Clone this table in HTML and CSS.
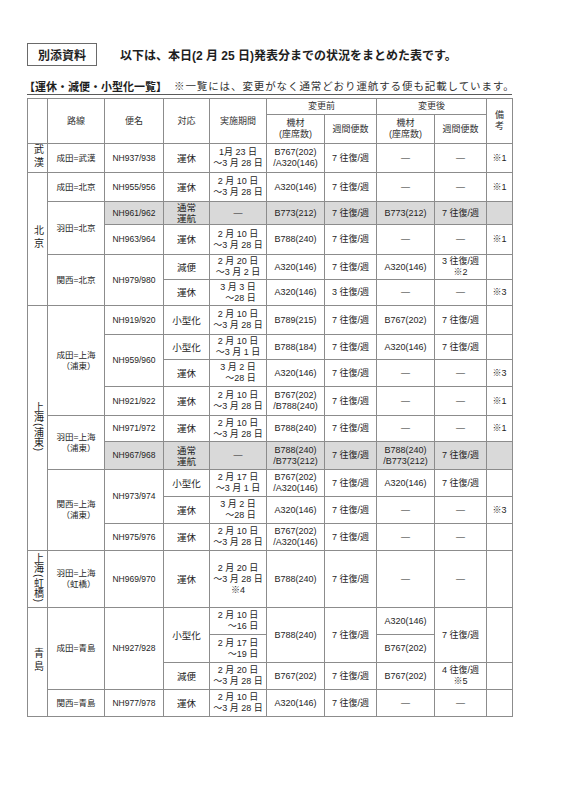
FILE: index.html
```html
<!DOCTYPE html>
<html lang="ja">
<head>
<meta charset="utf-8">
<title>運休・減便・小型化一覧</title>
<link rel="stylesheet" href="styles.css">
</head>
<body>
<div class="page">
  <div class="top">
    <div class="tag">別添資料</div>
    <div class="title">以下は、本日(2 月 25 日)発表分までの状況をまとめた表です。</div>
  </div>
  <div class="sub">
    <span class="subhead">【運休・減便・小型化一覧】</span>
    <span class="note">※一覧には、変更がなく通常どおり運航する便も記載しています。</span>
  </div>
  <table class="tbl">
    <colgroup>
      <col class="c20"><col class="c57"><col class="c59"><col class="c46"><col class="c57">
      <col class="c58"><col class="c52"><col class="c58"><col class="c52"><col class="c26">
    </colgroup>
    <thead>
      <tr class="h16">
        <th rowspan="2"></th><th rowspan="2">路線</th><th rowspan="2">便名</th><th rowspan="2">対応</th><th rowspan="2">実施期間</th>
        <th colspan="2">変更前</th><th colspan="2">変更後</th><th rowspan="2">備<br>考</th>
      </tr>
      <tr class="h29">
        <th>機材<br>(座席数)</th><th>週間便数</th><th>機材<br>(座席数)</th><th>週間便数</th>
      </tr>
    </thead>
    <tbody>
      <tr class="h28">
        <td class="rg"><span class="v sp">武漢</span></td><td class="rt">成田=武漢</td><td class="fl">NH937/938</td><td class="ac">運休</td>
        <td>1月 23 日<br>～3 月 28 日</td><td>B767(202)<br>/A320(146)</td><td>7 往復/週</td><td>—</td><td>—</td><td>※1</td>
      </tr>
      <tr class="h29">
        <td class="rg" rowspan="5"><span class="v sp">北京</span></td><td class="rt">成田=北京</td><td class="fl">NH955/956</td><td class="ac">運休</td>
        <td>2 月 10 日<br>～3 月 28 日</td><td>A320(146)</td><td>7 往復/週</td><td>—</td><td>—</td><td>※1</td>
      </tr>
      <tr class="h23 gray">
        <td class="rt w" rowspan="2">羽田=北京</td><td class="fl">NH961/962</td><td class="ac">通常<br>運航</td>
        <td>—</td><td>B773(212)</td><td>7 往復/週</td><td>B773(212)</td><td>7 往復/週</td><td></td>
      </tr>
      <tr class="h30">
        <td class="fl">NH963/964</td><td class="ac">運休</td>
        <td>2 月 10 日<br>～3 月 28 日</td><td>B788(240)</td><td>7 往復/週</td><td>—</td><td>—</td><td>※1</td>
      </tr>
      <tr class="h25">
        <td class="rt" rowspan="2">関西=北京</td><td class="fl" rowspan="2">NH979/980</td><td class="ac">減便</td>
        <td>2 月 20 日<br>～3 月 2 日</td><td>A320(146)</td><td>7 往復/週</td><td>A320(146)</td><td>3 往復/週<br>※2</td><td></td>
      </tr>
      <tr class="h26">
        <td class="ac">運休</td>
        <td><span class="ra">3 月 3 日<br>～28 日</span></td><td>A320(146)</td><td>3 往復/週</td><td>—</td><td>—</td><td>※3</td>
      </tr>
      <tr class="h29">
        <td class="rg" rowspan="9"><span class="v">上海(浦東)</span></td>
        <td class="rt" rowspan="4"><span class="ra">成田=上海<br>（浦東）</span></td><td class="fl">NH919/920</td><td class="ac">小型化</td>
        <td>2 月 10 日<br>～3 月 28 日</td><td>B789(215)</td><td>7 往復/週</td><td>B767(202)</td><td>7 往復/週</td><td></td>
      </tr>
      <tr class="h25">
        <td class="fl" rowspan="2">NH959/960</td><td class="ac">小型化</td>
        <td>2 月 10 日<br>～3 月 1 日</td><td>B788(184)</td><td>7 往復/週</td><td>A320(146)</td><td>7 往復/週</td><td></td>
      </tr>
      <tr class="h27">
        <td class="ac">運休</td>
        <td><span class="ra">3 月 2 日<br>～28 日</span></td><td>A320(146)</td><td>7 往復/週</td><td>—</td><td>—</td><td>※3</td>
      </tr>
      <tr class="h29">
        <td class="fl">NH921/922</td><td class="ac">運休</td>
        <td>2 月 10 日<br>～3 月 28 日</td><td>B767(202)<br>/B788(240)</td><td>7 往復/週</td><td>—</td><td>—</td><td>※1</td>
      </tr>
      <tr class="h26">
        <td class="rt" rowspan="2"><span class="ra">羽田=上海<br>（浦東）</span></td><td class="fl">NH971/972</td><td class="ac">運休</td>
        <td>2 月 10 日<br>～3 月 28 日</td><td>B788(240)</td><td>7 往復/週</td><td>—</td><td>—</td><td>※1</td>
      </tr>
      <tr class="h28 gray">
        <td class="fl">NH967/968</td><td class="ac">通常<br>運航</td>
        <td>—</td><td>B788(240)<br>/B773(212)</td><td>7 往復/週</td><td>B788(240)<br>/B773(212)</td><td>7 往復/週</td><td></td>
      </tr>
      <tr class="h27">
        <td class="rt" rowspan="3"><span class="ra">関西=上海<br>（浦東）</span></td><td class="fl" rowspan="2">NH973/974</td><td class="ac">小型化</td>
        <td>2 月 17 日<br>～3 月 1 日</td><td>B767(202)<br>/A320(146)</td><td>7 往復/週</td><td>A320(146)</td><td>7 往復/週</td><td></td>
      </tr>
      <tr class="h27">
        <td class="ac">運休</td>
        <td><span class="ra">3 月 2 日<br>～28 日</span></td><td>A320(146)</td><td>7 往復/週</td><td>—</td><td>—</td><td>※3</td>
      </tr>
      <tr class="h27">
        <td class="fl">NH975/976</td><td class="ac">運休</td>
        <td>2 月 10 日<br>～3 月 28 日</td><td>B767(202)<br>/A320(146)</td><td>7 往復/週</td><td>—</td><td>—</td><td></td>
      </tr>
      <tr class="h57">
        <td class="rg"><span class="v">上海(虹橋)</span></td>
        <td class="rt"><span class="ra">羽田=上海<br>（虹橋）</span></td><td class="fl">NH969/970</td><td class="ac">運休</td>
        <td>2 月 20 日<br>～3 月 28 日<br>※4</td><td>B788(240)</td><td>7 往復/週</td><td>—</td><td>—</td><td></td>
      </tr>
      <tr class="h27">
        <td class="rg" rowspan="4"><span class="v sp">青島</span></td>
        <td class="rt" rowspan="3">成田=青島</td><td class="fl" rowspan="3">NH927/928</td><td class="ac" rowspan="2">小型化</td>
        <td><span class="ra">2 月 10 日<br>～16 日</span></td><td rowspan="2">B788(240)</td><td rowspan="2">7 往復/週</td><td>A320(146)</td><td rowspan="2">7 往復/週</td><td rowspan="2"></td>
      </tr>
      <tr class="h28">
        <td><span class="ra">2 月 17 日<br>～19 日</span></td><td>B767(202)</td>
      </tr>
      <tr class="h27">
        <td class="ac">減便</td>
        <td>2 月 20 日<br>～3 月 28 日</td><td>B767(202)</td><td>7 往復/週</td><td>B767(202)</td><td>4 往復/週<br>※5</td><td></td>
      </tr>
      <tr class="h27">
        <td class="rt">関西=青島</td><td class="fl">NH977/978</td><td class="ac">運休</td>
        <td>2 月 10 日<br>～3 月 28 日</td><td>A320(146)</td><td>7 往復/週</td><td>—</td><td>—</td><td></td>
      </tr>
    </tbody>
  </table>
</div>
</body>
</html>
```

FILE: styles.css
```css
* { box-sizing: border-box; }

body {
  margin: 0;
  background: #ffffff;
  color: #1e1e1e;
  font-family: "Liberation Sans", "Noto Sans CJK JP", sans-serif;
}

.page {
  padding: 43px 0 0 27px;
}

.top {
  display: flex;
  align-items: center;
  height: 23px;
}

.tag {
  width: 70px;
  height: 23px;
  border: 1px solid #6a6a6a;
  display: flex;
  align-items: center;
  justify-content: center;
  font-size: 12px;
  font-weight: bold;
}

.title {
  margin-left: 23px;
  font-size: 12px;
  font-weight: bold;
}

.sub {
  margin-top: 11px;
  width: 485px;
  height: 18px;
  border-bottom: 1px solid #5a5a5a;
  display: flex;
  align-items: center;
  white-space: nowrap;
}

.subhead {
  font-size: 11px;
  font-weight: bold;
  margin-left: -3px;
}

.note {
  margin-left: 7px;
  font-size: 10.5px;
  letter-spacing: 0.9px;
  color: #333;
}

.tbl {
  margin-top: 3px;
  width: 485px;
  table-layout: fixed;
  border-collapse: collapse;
  border: 1px solid #555;
  font-size: 9px;
  line-height: 11px;
}

.c20 { width: 20px; }
.c57 { width: 57px; }
.c59 { width: 59px; }
.c46 { width: 46px; }
.c58 { width: 58px; }
.c52 { width: 52px; }
.c26 { width: 26px; }

.tbl th,
.tbl td {
  border: 1px solid #8c8c8c;
  padding: 0 1px;
  text-align: center;
  vertical-align: middle;
  font-weight: normal;
  white-space: nowrap;
  overflow: hidden;
}

.tbl th {
  color: #333;
}

.h16 { height: 16px; }
.h23 { height: 23px; }
.h25 { height: 25px; }
.h26 { height: 26px; }
.h27 { height: 27px; }
.h28 { height: 28px; }
.h29 { height: 29px; }
.h30 { height: 30px; }
.h57 { height: 57px; }

.gray td { background: #d9d9d9; }
.gray td.w { background: #ffffff; }

.rg { font-size: 10px; }

.v {
  display: inline-block;
  writing-mode: vertical-rl;
  text-orientation: mixed;
  line-height: 12px;
  letter-spacing: 0.5px;
}

.v.sp { letter-spacing: 3px; }

.rt { font-size: 8.5px; }
.fl { font-size: 8.5px; }
.ac { font-size: 9.5px; }

.ra {
  display: inline-block;
  text-align: right;
}
```
